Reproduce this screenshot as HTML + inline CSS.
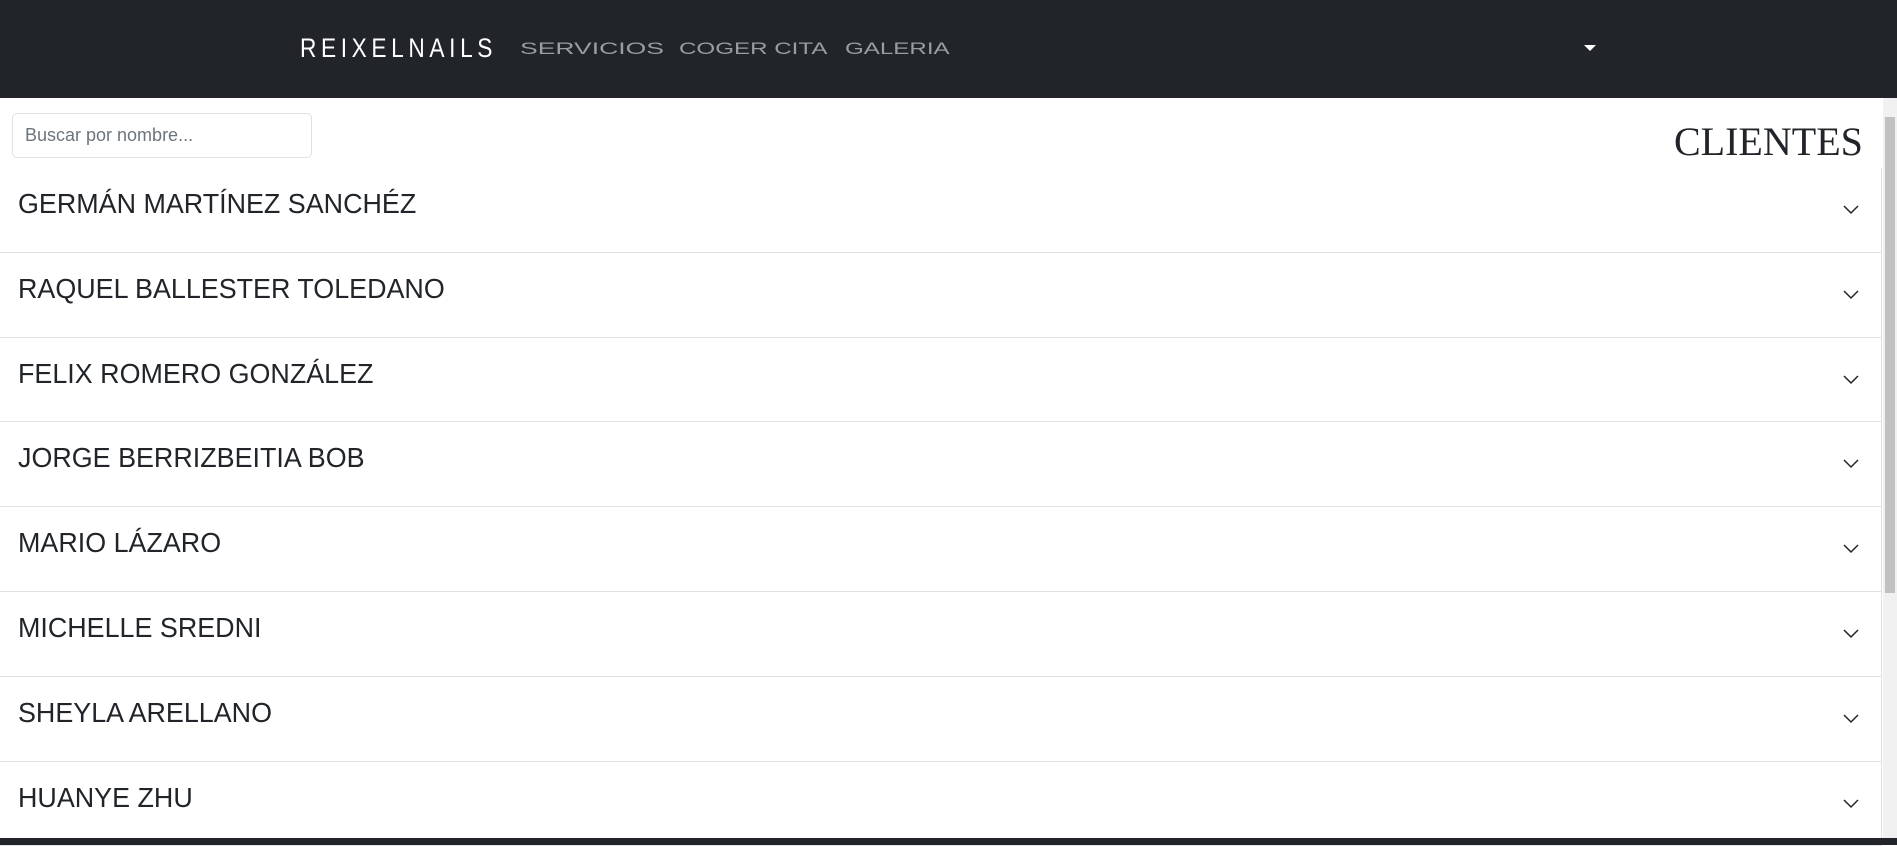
<!DOCTYPE html>
<html><head><meta charset="utf-8"><style>
*{margin:0;padding:0;box-sizing:border-box}
body{width:1897px;height:845px;overflow:hidden;background:#fff;font-family:"Liberation Sans",sans-serif;position:relative}
.nav{position:absolute;left:0;top:0;width:1897px;height:98px;background:#212529}
.brand{position:absolute;left:300px;top:33px;color:#fff;font-size:27px;letter-spacing:5.5px;font-weight:300;transform:scaleX(.84);transform-origin:left}
.links a{position:absolute;top:39px;color:#9a9da0;font-size:17px;letter-spacing:0;text-decoration:none;transform:scaleX(1.42);transform-origin:left}
.caret{position:absolute;left:1584px;top:45px;width:0;height:0;border-left:6px solid transparent;border-right:6px solid transparent;border-top:6px solid #fff}
.search{position:absolute;left:12px;top:113px;width:300px;height:45px;border:1px solid #dee2e6;border-radius:5px;color:#6c757d;font-size:18px;padding:11px 12px;font-family:"Liberation Sans",sans-serif}
.title{position:absolute;left:1674px;top:118px;font-family:"Liberation Serif",serif;font-size:40px;color:#212529;line-height:48px}
.rows{position:absolute;left:0;top:168px;width:1882px;border-right:1px solid #dee2e6}
.row{height:84.8px;border-bottom:1px solid #dee2e6;position:relative}
.row span{position:absolute;left:18px;top:20px;font-size:28px;color:#212529;transform:scaleX(.96);transform-origin:left}
.row svg{position:absolute;left:1843px;top:37px}
.sb{position:absolute;left:1883px;top:98px;width:14px;height:740px;background:#f1f1f1}
.thumb{position:absolute;left:1885px;top:117px;width:10px;height:476px;background:#c1c1c1}
.bot{position:absolute;left:0;top:838px;width:1897px;height:7px;background:#212529}
</style></head><body>
<div class="nav">
<div class="brand">REIXELNAILS</div>
<div class="links"><a style="left:520px;transform:scaleX(1.56)">SERVICIOS</a><a style="left:679px">COGER CITA</a><a style="left:845px">GALERIA</a></div>
<div class="caret"></div>
</div>
<div class="search">Buscar por nombre...</div>
<div class="title">CLIENTES</div>
<div class="rows">
<div class="row"><span>GERMÁN MARTÍNEZ SANCHÉZ</span><svg width="16" height="10"><path d="M1 1L8 8L15 1" fill="none" stroke="#212529" stroke-width="1.5"/></svg></div>
<div class="row"><span>RAQUEL BALLESTER TOLEDANO</span><svg width="16" height="10"><path d="M1 1L8 8L15 1" fill="none" stroke="#212529" stroke-width="1.5"/></svg></div>
<div class="row"><span>FELIX ROMERO GONZÁLEZ</span><svg width="16" height="10"><path d="M1 1L8 8L15 1" fill="none" stroke="#212529" stroke-width="1.5"/></svg></div>
<div class="row"><span>JORGE BERRIZBEITIA BOB</span><svg width="16" height="10"><path d="M1 1L8 8L15 1" fill="none" stroke="#212529" stroke-width="1.5"/></svg></div>
<div class="row"><span>MARIO LÁZARO</span><svg width="16" height="10"><path d="M1 1L8 8L15 1" fill="none" stroke="#212529" stroke-width="1.5"/></svg></div>
<div class="row"><span>MICHELLE SREDNI</span><svg width="16" height="10"><path d="M1 1L8 8L15 1" fill="none" stroke="#212529" stroke-width="1.5"/></svg></div>
<div class="row"><span>SHEYLA ARELLANO</span><svg width="16" height="10"><path d="M1 1L8 8L15 1" fill="none" stroke="#212529" stroke-width="1.5"/></svg></div>
<div class="row"><span>HUANYE ZHU</span><svg width="16" height="10"><path d="M1 1L8 8L15 1" fill="none" stroke="#212529" stroke-width="1.5"/></svg></div>
</div>
<div class="sb"></div><div class="thumb"></div>
<div class="bot"></div>
</body></html>
